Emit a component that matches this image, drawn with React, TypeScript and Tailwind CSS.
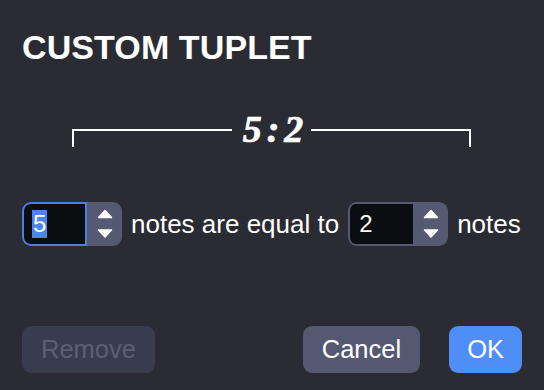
import React from "react";

function Arrows() {
  return (
    <svg width="16" height="30" viewBox="0 0 16 30" className="block">
      <path d="M1.5 8.5 L8 1.5 L14.5 8.5 Z" fill="#ffffff" stroke="#ffffff" strokeWidth="1.5" strokeLinejoin="round" />
      <path d="M1.5 21 L8 28 L14.5 21 Z" fill="#ffffff" stroke="#ffffff" strokeWidth="1.5" strokeLinejoin="round" />
    </svg>
  );
}

function Stepper({ value, focused }: { value: string; focused: boolean }) {
  return (
    <div className="flex h-[44px] w-[100px] shrink-0 overflow-hidden rounded-[9px] bg-[#555a72]">
      <div
        className={
          focused
            ? "flex h-full w-[65px] items-center rounded-l-[9px] border-2 border-[#4a7fdc] bg-[#0c0d11] pl-[8px]"
            : "flex h-full w-[65px] items-center rounded-l-[8px] border-2 border-r-0 border-[#555a72] bg-[#0c0d11] pl-[8px]"
        }
      >
        {focused ? (
          <span className="flex h-[28px] items-center bg-[#4d84ec] px-[1px] text-[24px] leading-[28px] text-white">
            {value}
          </span>
        ) : (
          <span className="px-[1px] text-[24px] leading-[28px] text-white">{value}</span>
        )}
      </div>
      <div className="flex flex-1 items-center justify-center">
        <Arrows />
      </div>
    </div>
  );
}

export default function App() {
  return (
    <div
      className="flex h-[390px] w-[544px] flex-col bg-[#2a2b33] px-[22px] text-white"
      style={{ fontFamily: '"Liberation Sans", Arial, sans-serif' }}
    >
      <div className="pt-[30px] text-[34px] font-bold leading-[34px] tracking-[0.1px]">CUSTOM TUPLET</div>

      <div className="mt-[47px] flex h-[36px] items-center pl-[50px] pr-[51px]">
        <div className="mt-[18px] h-[18px] flex-1 border-l-2 border-t-2 border-white" />
        <div
          className="flex items-center pl-[11px] pr-[8px] text-[38px] font-bold italic leading-[36px] [-webkit-text-stroke:0.7px_white]"
          style={{ fontFamily: '"Liberation Serif", "Times New Roman", serif' }}
        >
          <span>5</span>
          <span className="mx-[5px]">:</span>
          <span>2</span>
        </div>
        <div className="mt-[18px] h-[18px] flex-1 border-r-2 border-t-2 border-white" />
      </div>

      <div className="mt-[55px] flex h-[44px] items-center gap-[9px] text-[26px]">
        <Stepper value="5" focused />
        <span>notes are equal to</span>
        <Stepper value="2" focused={false} />
        <span>notes</span>
      </div>

      <div className="mt-auto mb-[17px] flex items-center text-[25.5px]">
        <button className="flex h-[47px] items-center rounded-[9px] bg-[#393c4e] px-[19px] text-[#5c6072]">
          Remove
        </button>
        <div className="flex-1" />
        <button className="flex h-[47px] items-center rounded-[9px] bg-[#545870] px-[19px] text-white">
          Cancel
        </button>
        <button className="ml-[29px] flex h-[47px] items-center rounded-[9px] bg-[#4f8df7] px-[18px] text-white">
          OK
        </button>
      </div>
    </div>
  );
}
